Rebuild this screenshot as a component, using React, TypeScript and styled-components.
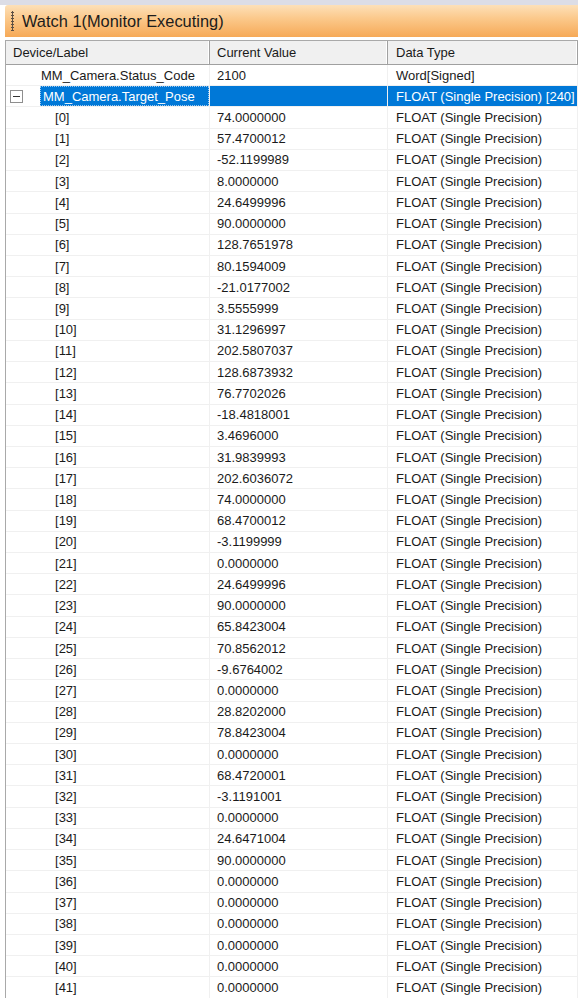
import React from "react";
import styled, { createGlobalStyle } from "styled-components";

const GlobalStyle = createGlobalStyle`
  html, body {
    margin: 0;
    padding: 0;
    background: #ffffff;
    overflow: hidden;
  }
  body {
    font-family: "Liberation Sans", Arial, sans-serif;
    color: #1a1a1a;
  }
`;

const Window = styled.div`
  width: 578px;
  height: 998px;
  overflow: hidden;
  background: #ffffff;
  border-top: 5px solid #dcdde6;
  box-sizing: border-box;
`;

const TitleBar = styled.div`
  margin-left: 5px;
  height: 32px;
  display: flex;
  align-items: center;
  gap: 8px;
  padding-left: 6px;
  border-top-left-radius: 3px;
  background: linear-gradient(to bottom, #fde0b8 0%, #fbc788 45%, #f6a957 100%);
  color: #1c1c1c;
  font-size: 16.4px;
`;

const Grip = styled.div`
  width: 3px;
  height: 20px;
  background-image: radial-gradient(circle, #5e5044 1px, transparent 1.3px);
  background-size: 3px 3px;
`;

const Grid = styled.div`
  margin-top: 3px;
  margin-left: 5px;
  border-left: 1px solid #a9a9a9;
  border-top: 1px solid #a9a9a9;
  height: 1000px;
`;

const Row = styled.div<{ $header?: boolean }>`
  display: grid;
  grid-template-columns: 204px 178px 1fr;
  height: ${(p) => (p.$header ? "24px" : "21.22px")};
  box-sizing: border-box;
  border-bottom: 1px solid ${(p) => (p.$header ? "#a0a0a0" : "#f0f0f0")};
  background: ${(p) => (p.$header ? "#f0f0f0" : "#ffffff")};
  font-size: 13px;
  white-space: nowrap;
`;

const Cell = styled.div<{ $header?: boolean; $selected?: boolean; $pad?: number }>`
  display: flex;
  align-items: center;
  overflow: hidden;
  padding-left: ${(p) => p.$pad ?? 7}px;
  border-right: 1px solid ${(p) => (p.$header ? "#a0a0a0" : "#f0f0f0")};
  box-shadow: ${(p) => (p.$header ? "inset -1px 0 0 #ffffff" : "none")};
  background: ${(p) => (p.$selected ? "#0078d7" : "transparent")};
  color: ${(p) => (p.$selected ? "#ffffff" : "#1a1a1a")};
`;

const LabelCell = styled.div`
  display: flex;
  align-items: center;
  border-right: 1px solid #f0f0f0;
  overflow: hidden;
`;

const Toggle = styled.div`
  width: 11px;
  height: 11px;
  margin-left: 4px;
  border: 1px solid #8e8e8e;
  display: flex;
  align-items: center;
  justify-content: center;
  flex: none;
  &::after {
    content: "";
    width: 7px;
    height: 1px;
    background: #333;
  }
`;

const Label = styled.span<{ $indent: number; $selected?: boolean }>`
  margin-left: ${(p) => p.$indent}px;
  padding: 0 3px 0 3px;
  height: 100%;
  display: flex;
  align-items: center;
  flex: 1;
  background: ${(p) => (p.$selected ? "#0078d7" : "transparent")};
  color: ${(p) => (p.$selected ? "#ffffff" : "#1a1a1a")};
  outline: ${(p) => (p.$selected ? "1px dotted #9cc8f0" : "none")};
  outline-offset: -1px;
`;

const values = [
  "74.0000000", "57.4700012", "-52.1199989", "8.0000000", "24.6499996",
  "90.0000000", "128.7651978", "80.1594009", "-21.0177002", "3.5555999",
  "31.1296997", "202.5807037", "128.6873932", "76.7702026", "-18.4818001",
  "3.4696000", "31.9839993", "202.6036072", "74.0000000", "68.4700012",
  "-3.1199999", "0.0000000", "24.6499996", "90.0000000", "65.8423004",
  "70.8562012", "-9.6764002", "0.0000000", "28.8202000", "78.8423004",
  "0.0000000", "68.4720001", "-3.1191001", "0.0000000", "24.6471004",
  "90.0000000", "0.0000000", "0.0000000", "0.0000000", "0.0000000",
  "0.0000000", "0.0000000",
];

export default function App() {
  return (
    <>
      <GlobalStyle />
      <Window>
        <TitleBar>
          <Grip />
          <span>Watch 1(Monitor Executing)</span>
        </TitleBar>
        <Grid>
          <Row $header>
            <Cell $header>Device/Label</Cell>
            <Cell $header>Current Value</Cell>
            <Cell $header $pad={8}>Data Type</Cell>
          </Row>
          <Row>
            <LabelCell>
              <Label $indent={32}>MM_Camera.Status_Code</Label>
            </LabelCell>
            <Cell>2100</Cell>
            <Cell $pad={8}>Word[Signed]</Cell>
          </Row>
          <Row>
            <LabelCell>
              <Toggle />
              <Label $indent={17} $selected>MM_Camera.Target_Pose</Label>
            </LabelCell>
            <Cell $selected></Cell>
            <Cell $selected $pad={8}>FLOAT (Single Precision) [240]</Cell>
          </Row>
          {values.map((v, i) => (
            <Row key={i}>
              <LabelCell>
                <Label $indent={46}>[{i}]</Label>
              </LabelCell>
              <Cell>{v}</Cell>
              <Cell $pad={8}>FLOAT (Single Precision)</Cell>
            </Row>
          ))}
        </Grid>
      </Window>
    </>
  );
}
